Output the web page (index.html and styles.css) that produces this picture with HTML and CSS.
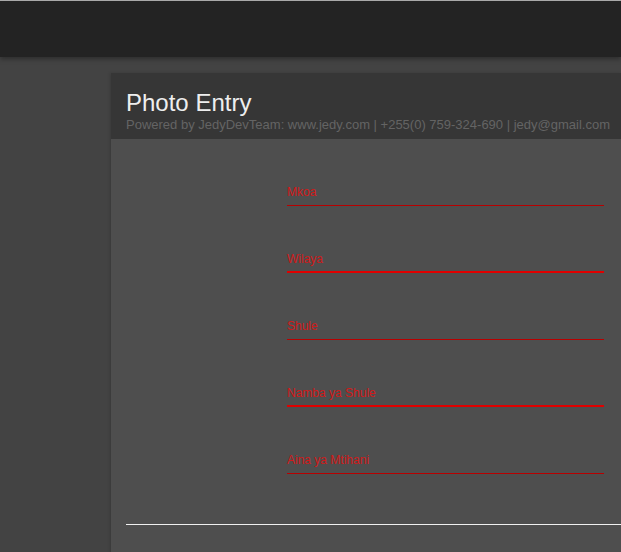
FILE: index.html
```html
<!DOCTYPE html>
<html>
<head>
<meta charset="utf-8">
<link rel="stylesheet" href="styles.css">
</head>
<body>
<div class="topbar"></div>
<div class="main">
  <div class="card">
    <div class="card-head">
      <h1 class="title">Photo Entry</h1>
      <div class="subtitle">Powered by JedyDevTeam: www.jedy.com | +255(0) 759-324-690 | jedy@gmail.com</div>
    </div>
    <div class="card-body">
      <div class="fields">
        <div class="field"><label class="label">Mkoa</label><div class="line"></div></div>
        <div class="field"><label class="label">Wilaya</label><div class="line thick"></div></div>
        <div class="field"><label class="label">Shule</label><div class="line"></div></div>
        <div class="field"><label class="label">Namba ya Shule</label><div class="line thick"></div></div>
        <div class="field"><label class="label">Aina ya Mtihani</label><div class="line"></div></div>
      </div>
      <div class="divider"></div>
    </div>
  </div>
</div>
</body>
</html>
```

FILE: styles.css
```css
html, body {
  margin: 0;
  padding: 0;
  overflow: hidden;
  height: 100%;
}
body {
  background: #434343;
  font-family: "Liberation Sans", Arial, sans-serif;
}
.topbar {
  height: 56px;
  background: #232323;
  border-top: 1px solid #a9a9a9;
  box-shadow: 0 2px 5px rgba(0, 0, 0, 0.35);
  position: relative;
  z-index: 1;
}
.main {
  padding: 16px 0 0 111px;
}
.card {
  background: #4e4e4e;
  box-shadow: -1px 0 3px rgba(0, 0, 0, 0.15);
}
.card-head {
  background: #363636;
  height: 66px;
  padding: 0 0 0 15px;
  box-sizing: border-box;
  overflow: hidden;
}
.title {
  margin: 0;
  padding-top: 16px;
  font-size: 24px;
  line-height: 28px;
  font-weight: normal;
  color: #eeeeee;
}
.subtitle {
  font-size: 13px;
  line-height: 15px;
  color: #646464;
  white-space: nowrap;
}
.card-body {
  padding: 0 0 40px 15px;
}
.fields {
  margin-left: 161px;
  width: 317px;
}
.field {
  height: 67px;
  display: flex;
  flex-direction: column;
  justify-content: flex-end;
}
.label {
  font-size: 12px;
  line-height: 14px;
  color: #d11a1a;
  margin-bottom: 6px;
}
.line {
  height: 1px;
  background: #b80000;
}
.line.thick {
  height: 2px;
  margin-top: -1px;
  background: #e00000;
}
.divider {
  margin-top: 50px;
  height: 1px;
  background: #f0f0f0;
}
```
